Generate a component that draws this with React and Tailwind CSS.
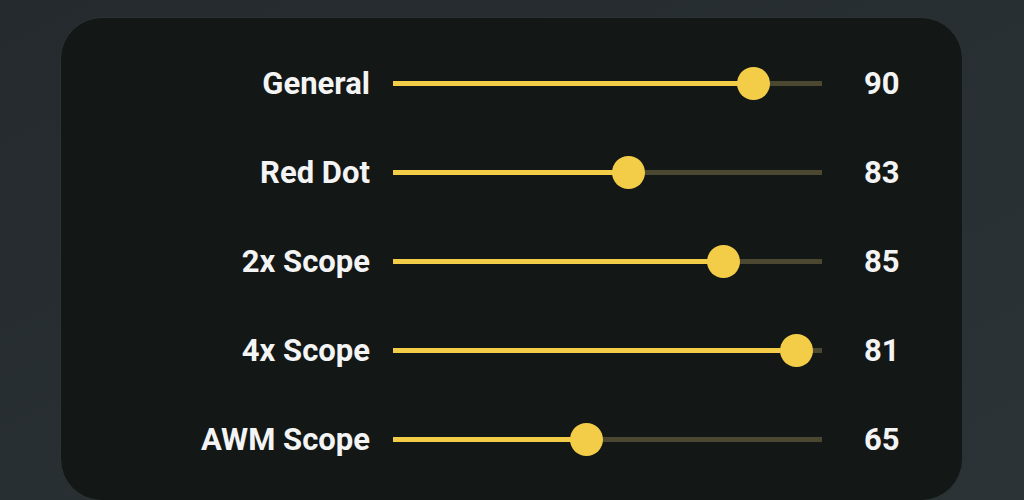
const rows = [
  { label: 'General', value: 90, pos: 360 },
  { label: 'Red Dot', value: 83, pos: 235 },
  { label: '2x Scope', value: 85, pos: 330 },
  { label: '4x Scope', value: 81, pos: 403 },
  { label: 'AWM Scope', value: 65, pos: 193 },
]

function Slider({ pos }) {
  return (
    <div className="relative w-[429px] h-[34px] flex items-center">
      <div className="w-full h-[5px] bg-[#4b4730]" />
      <div className="absolute left-0 h-[5px] bg-[#f3cd48]" style={{ width: pos }} />
      <div
        className="absolute w-[33px] h-[33px] -ml-[16px] rounded-full bg-[#f3cd48]"
        style={{ left: pos }}
      />
    </div>
  )
}

export default function App() {
  return (
    <div
      className="w-[1024px] h-[500px] overflow-hidden bg-gradient-to-br from-[#242a2d] to-[#2c3336] pl-[60px] pt-[17px]"
      style={{ fontFamily: 'Roboto, "Liberation Sans", sans-serif' }}
    >
      <div className="w-[903px] h-[484px] rounded-[42px] bg-[#131817] border border-[#2b3234] pt-[48px] flex flex-col gap-[55px]">
        {rows.map((r) => (
          <div key={r.label} className="flex items-center h-[34px]">
            <div className="w-[309px] text-right text-[31px] font-bold text-[#f4f4f4] leading-none">{r.label}</div>
            <div className="ml-[23px]">
              <Slider pos={r.pos} />
            </div>
            <div className="ml-[42px] text-[31px] font-bold text-[#f4f4f4] leading-none">{r.value}</div>
          </div>
        ))}
      </div>
    </div>
  )
}
